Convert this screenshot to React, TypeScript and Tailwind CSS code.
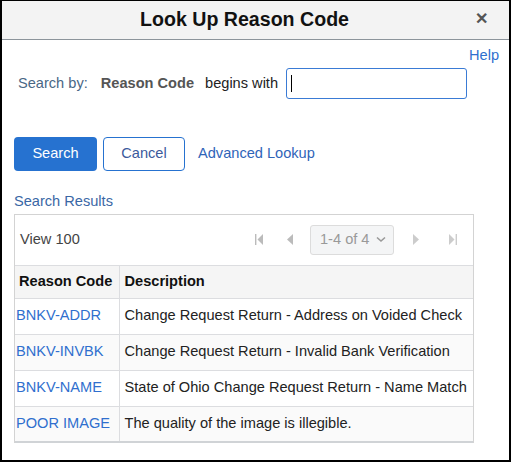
export default function App() {
  const rows = [
    { code: "BNKV-ADDR", desc: "Change Request Return - Address on Voided Check" },
    { code: "BNKV-INVBK", desc: "Change Request Return - Invalid Bank Verification" },
    { code: "BNKV-NAME", desc: "State of Ohio Change Request Return - Name Match" },
    { code: "POOR IMAGE", desc: "The quality of the image is illegible." },
  ];

  return (
    <div
      className="w-[511px] h-[462px] bg-white border-t border-x-2 border-b-2 border-black flex flex-col text-[14.6px] text-[#333]"
      style={{ fontFamily: '"Liberation Sans", Arial, sans-serif' }}
    >
      {/* Header */}
      <div className="relative h-[39px] shrink-0 bg-[#f3f3f3] border-b border-[#8c949b] flex items-center justify-center pr-[22px]">
        <span className="text-[19.6px] font-bold text-[#111] leading-none">Look Up Reason Code</span>
        <span className="absolute right-[21px] top-[10px] text-[16px] font-bold text-[#555] leading-none">✕</span>
      </div>

      {/* Help */}
      <div className="flex justify-end pr-[10px] pt-[8px] h-[28px]">
        <a className="text-[#2f6fce] leading-none">Help</a>
      </div>

      {/* Search by */}
      <div className="flex items-center h-[31px] pl-[16px]">
        <span className="text-[#4a6785]">Search by:</span>
        <span className="ml-[13px] font-bold text-[#555]">Reason Code</span>
        <span className="ml-[11px] text-[#222]">begins with</span>
        <div className="ml-[8px] w-[181px] h-[31px] border border-[#3a7bd5] rounded-[3px] flex items-center pl-[4px]">
          <div className="w-px h-[17px] bg-black" />
        </div>
      </div>

      {/* Buttons */}
      <div className="flex items-center mt-[38px] pl-[12px]">
        <button className="w-[83px] h-[34px] bg-[#2672d0] rounded-[4px] text-white">Search</button>
        <button className="ml-[6px] w-[82px] h-[34px] border border-[#2672d0] rounded-[4px] text-[#3b5a9c] bg-white">
          Cancel
        </button>
        <a className="ml-[13px] text-[#2f64b8]">Advanced Lookup</a>
      </div>

      {/* Search Results */}
      <div className="mt-[23px] pl-[12px] text-[#3a67a5] leading-none">Search Results</div>

      <div className="ml-[12px] mt-[5px] w-[460px] border border-[#d3d3d3] border-b-0">
        {/* Toolbar */}
        <div className="h-[50px] flex items-center pl-[5px] pr-[16px]">
          <span className="text-[#444]">View 100</span>
          <div className="ml-auto flex items-center">
            <svg width="8" height="11" viewBox="0 0 8 11" className="mr-[24px]">
              <rect x="0" y="0" width="1.4" height="11" fill="#bbb" />
              <path d="M8 0 L2.5 5.5 L8 11 Z" fill="#bbb" />
            </svg>
            <svg width="6" height="11" viewBox="0 0 6 11" className="mr-[17px]">
              <path d="M6 0 L0 5.5 L6 11 Z" fill="#bbb" />
            </svg>
            <div className="w-[84px] h-[30px] bg-[#f4f5f6] border border-[#dcdcdc] rounded-[3px] flex items-center pl-[9px] text-[#999]">
              <span>1-4 of 4</span>
              <svg width="10" height="7" viewBox="0 0 10 7" className="ml-[6px]">
                <path d="M1 1.5 L5 5 L9 1.5" stroke="#999" strokeWidth="1.6" fill="none" />
              </svg>
            </div>
            <svg width="6" height="11" viewBox="0 0 6 11" className="ml-[19px]">
              <path d="M0 0 L6 5.5 L0 11 Z" fill="#ccc" />
            </svg>
            <svg width="8" height="11" viewBox="0 0 8 11" className="ml-[30px]">
              <path d="M0 0 L5.5 5.5 L0 11 Z" fill="#ccc" />
              <rect x="6.6" y="0" width="1.4" height="11" fill="#ccc" />
            </svg>
          </div>
        </div>

        {/* Table */}
        <table className="w-full table-fixed border-collapse">
          <colgroup>
            <col className="w-[104px]" />
            <col />
          </colgroup>
          <thead>
            <tr className="h-[33px] bg-[#f5f5f5]">
              <th className="text-left font-bold text-[#111] px-[4px] border-y border-r border-[#dcdde0] whitespace-nowrap">
                Reason Code
              </th>
              <th className="text-left font-bold text-[#111] px-[5px] border-y border-[#dcdde0]">Description</th>
            </tr>
          </thead>
          <tbody>
            {rows.map((r, i) => (
              <tr
                key={r.code}
                className={`h-[36px] ${i % 2 === 1 || i === 3 ? "bg-[#fafafa]" : "bg-white"} ${
                  i === 3 ? "border-b-2 border-b-[#d0d3d6]" : "border-b border-b-[#dcdde0]"
                }`}
              >
                <td className="pl-[1px] pr-0 text-[#2f6fce] border-r border-[#dcdde0] whitespace-nowrap">{r.code}</td>
                <td className="px-[5px] text-[#222] whitespace-nowrap">{r.desc}</td>
              </tr>
            ))}
          </tbody>
        </table>
      </div>
    </div>
  );
}
